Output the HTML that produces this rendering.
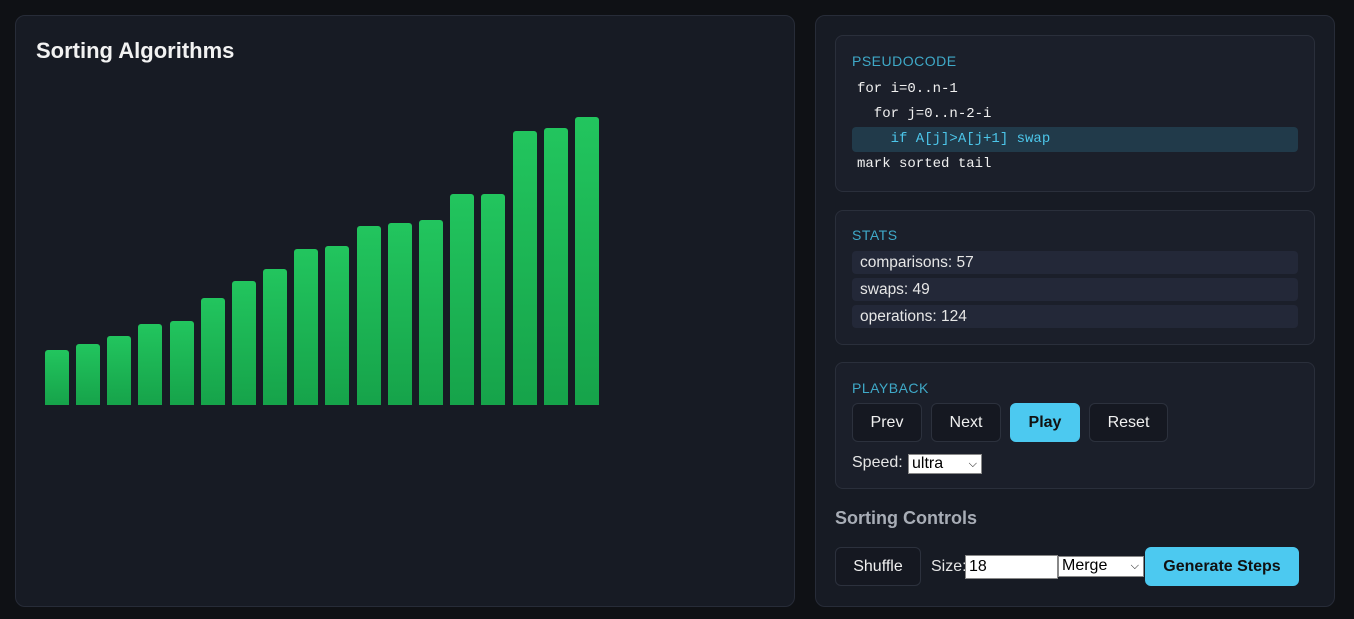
<!DOCTYPE html>
<html><head><style>
body{margin:0;width:1354px;height:619px;background:#0f1115;font-family:"Liberation Sans",sans-serif;position:relative;overflow:hidden}
.panel{position:absolute;background:#171b24;border:1px solid #272c38;border-radius:10px;box-sizing:border-box}
.card{position:absolute;left:835px;width:480px;background:#1b1f2a;border:1px solid #2a2f3b;border-radius:8px;box-sizing:border-box}
.lbl{position:absolute;left:16px;font-size:14px;color:#3fa9c8;letter-spacing:0.5px}
.code{position:absolute;left:21px;font-family:"Liberation Mono",monospace;font-size:14px;color:#f0f0f0}
.stat{position:absolute;left:16px;width:446px;height:23px;background:#232838;border-radius:4px;color:#e6e6e6;font-size:15.5px;line-height:23px;padding-left:8px;box-sizing:border-box}
.btn{position:absolute;height:39px;border:1px solid #2c313d;background:#151821;color:#f0f0f0;border-radius:6px;font-size:16px;text-align:center;line-height:37px;box-sizing:border-box}
.bar{position:absolute;width:24px;bottom:214px;border-radius:3px 3px 0 0;background:linear-gradient(#22c55e,#16a34a)}
.sel{position:absolute;background:#fff;border:1px solid #888;color:#000;font-size:16px;box-sizing:border-box;line-height:18px;padding-left:3px}
</style></head><body>
<div class="panel" style="left:15px;top:15px;width:780px;height:592px">
<div style="position:absolute;left:20px;top:22px;font-size:22px;font-weight:bold;color:#f2f2f2">Sorting Algorithms</div>
</div>
<div class="bar" style="left:45px;height:55px"></div>
<div class="bar" style="left:76px;height:61px"></div>
<div class="bar" style="left:107px;height:69px"></div>
<div class="bar" style="left:138px;height:81px"></div>
<div class="bar" style="left:170px;height:84px"></div>
<div class="bar" style="left:201px;height:107px"></div>
<div class="bar" style="left:232px;height:124px"></div>
<div class="bar" style="left:263px;height:136px"></div>
<div class="bar" style="left:294px;height:156px"></div>
<div class="bar" style="left:325px;height:159px"></div>
<div class="bar" style="left:357px;height:179px"></div>
<div class="bar" style="left:388px;height:182px"></div>
<div class="bar" style="left:419px;height:185px"></div>
<div class="bar" style="left:450px;height:211px"></div>
<div class="bar" style="left:481px;height:211px"></div>
<div class="bar" style="left:513px;height:274px"></div>
<div class="bar" style="left:544px;height:277px"></div>
<div class="bar" style="left:575px;height:288px"></div>

<div class="panel" style="left:815px;top:15px;width:520px;height:592px"></div>
<div class="card" style="top:35px;height:157px">
<div class="lbl" style="top:17px">PSEUDOCODE</div>
<div class="code" style="top:45px">for i=0..n-1</div>
<div class="code" style="top:70px">&nbsp;&nbsp;for j=0..n-2-i</div>
<div style="position:absolute;left:16px;top:91px;width:446px;height:25px;background:#213a4a;border-radius:4px"></div>
<div class="code" style="top:95px;color:#4cc6ea">&nbsp;&nbsp;&nbsp;&nbsp;if A[j]&gt;A[j+1] swap</div>
<div class="code" style="top:120px">mark sorted tail</div>
</div>
<div class="card" style="top:210px;height:135px">
<div class="lbl" style="top:16px">STATS</div>
<div class="stat" style="top:40px">comparisons: 57</div>
<div class="stat" style="top:67px">swaps: 49</div>
<div class="stat" style="top:94px">operations: 124</div>
</div>
<div class="card" style="top:362px;height:127px">
<div class="lbl" style="top:17px">PLAYBACK</div>
<div class="btn" style="left:16px;top:40px;width:70px">Prev</div>
<div class="btn" style="left:95px;top:40px;width:70px">Next</div>
<div class="btn" style="left:174px;top:40px;width:70px;background:#4cc9f0;border-color:#4cc9f0;color:#111;font-weight:bold">Play</div>
<div class="btn" style="left:253px;top:40px;width:79px">Reset</div>
<div style="position:absolute;left:16px;top:91px;color:#e6e6e6;font-size:16px">Speed:</div>
<div class="sel" style="left:72px;top:91px;width:74px;height:20px">ultra<span style="position:absolute;right:4px;font-size:11px">&#9013;</span></div>
</div>
<div style="position:absolute;left:835px;top:508px;font-size:18px;font-weight:bold;color:#a8adb6">Sorting Controls</div>
<div class="btn" style="left:835px;top:547px;width:86px">Shuffle</div>
<div style="position:absolute;left:931px;top:558px;color:#e6e6e6;font-size:16px">Size:</div>
<div class="sel" style="left:965px;top:555px;width:93px;height:24px;line-height:22px">18</div>
<div class="sel" style="left:1058px;top:556px;width:86px;height:21px">Merge<span style="position:absolute;right:4px;font-size:11px">&#9013;</span></div>
<div class="btn" style="left:1145px;top:547px;width:154px;background:#4cc9f0;border-color:#4cc9f0;color:#111;font-weight:bold">Generate Steps</div>
</body></html>
